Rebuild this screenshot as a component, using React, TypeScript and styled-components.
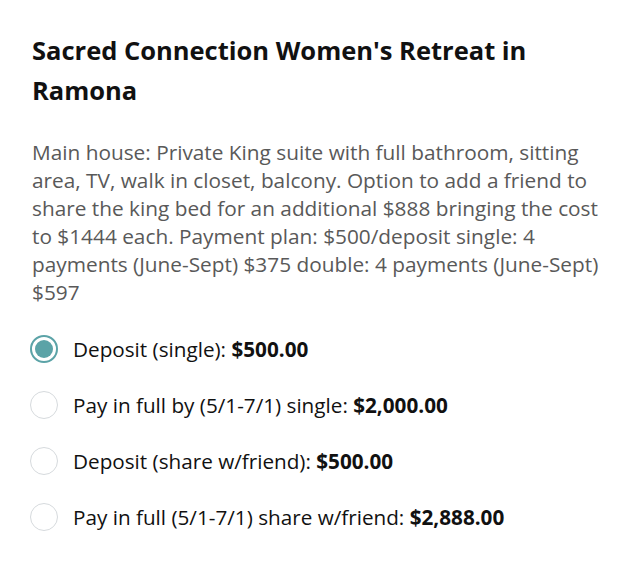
import React from "react";
import styled, { createGlobalStyle } from "styled-components";

const Global = createGlobalStyle`
  html, body { margin: 0; padding: 0; background: #fff; }
  body { font-family: "Open Sans", "Liberation Sans", sans-serif; }
`;

const Page = styled.div`
  padding: 30px 32px 0 32px;
  width: 631px;
  box-sizing: border-box;
`;

const Title = styled.h1`
  margin: 0;
  font-size: 25.5px;
  line-height: 40px;
  font-weight: 700;
  color: #111111;
`;

const Description = styled.p`
  margin: 28px 0 0 0;
  font-size: 20.8px;
  line-height: 28px;
  color: #595959;
`;

const Options = styled.div`
  margin-top: 29px;
  display: flex;
  flex-direction: column;
  gap: 28px;
`;

const Option = styled.label`
  display: flex;
  align-items: center;
  gap: 15px;
  font-size: 20.7px;
  line-height: 28px;
  color: #111111;
  cursor: pointer;
`;

const Radio = styled.span<{ $checked: boolean }>`
  width: 28px;
  height: 28px;
  box-sizing: border-box;
  border-radius: 50%;
  border: ${(p) => (p.$checked ? "2px solid #5ba3a7" : "1px solid #d6dadd")};
  display: flex;
  align-items: center;
  justify-content: center;
  flex-shrink: 0;
  margin-left: -2px;
  &::after {
    content: "";
    width: 18px;
    height: 18px;
    border-radius: 50%;
    background: ${(p) => (p.$checked ? "#5ba3a7" : "transparent")};
  }
`;

const Price = styled.strong`
  font-weight: 700;
`;

const options = [
  { label: "Deposit (single): ", price: "$500.00" },
  { label: "Pay in full by (5/1-7/1) single: ", price: "$2,000.00" },
  { label: "Deposit (share w/friend): ", price: "$500.00" },
  { label: "Pay in full (5/1-7/1) share w/friend: ", price: "$2,888.00" },
];

export default function App() {
  const [selected, setSelected] = React.useState(0);
  return (
    <>
      <Global />
      <Page>
        <Title>Sacred Connection Women's Retreat in Ramona</Title>
        <Description>
          Main house: Private King suite with full bathroom, sitting area, TV, walk in closet,
          balcony. Option to add a friend to share the king bed for an additional $888 bringing
          the cost to $1444 each. Payment plan: $500/deposit single: 4 payments (June-Sept) $375
          double: 4 payments (June-Sept) $597
        </Description>
        <Options>
          {options.map((o, i) => (
            <Option key={i} onClick={() => setSelected(i)}>
              <Radio $checked={selected === i} />
              <span>
                {o.label}
                <Price>{o.price}</Price>
              </span>
            </Option>
          ))}
        </Options>
      </Page>
    </>
  );
}
